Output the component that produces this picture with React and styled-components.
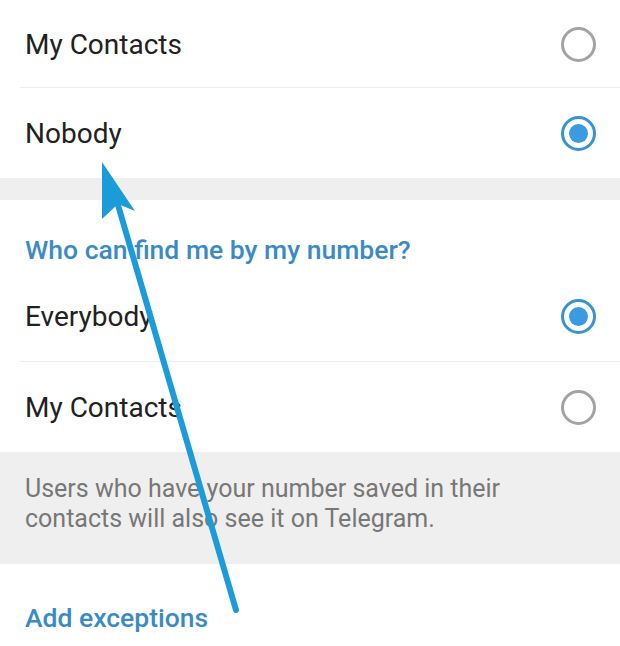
import React, { useState } from "react";
import styled, { createGlobalStyle } from "styled-components";

const GlobalStyle = createGlobalStyle`
  html, body {
    margin: 0;
    padding: 0;
    background: #ffffff;
  }
  body {
    font-family: Roboto, "Noto Sans", "Liberation Sans", sans-serif;
    -webkit-font-smoothing: antialiased;
  }
`;

const Screen = styled.div`
  position: relative;
  width: 620px;
  height: 646px;
  overflow: hidden;
  background: #ffffff;
`;

const Section = styled.div`
  background: #ffffff;
`;

const Gap = styled.div`
  height: 22px;
  background: #efefef;
`;

const Header = styled.div`
  height: 70px;
  padding: 34px 25px 0;
  box-sizing: border-box;
  color: #3a8bc4;
  font-size: 26.5px;
  font-weight: 500;
  line-height: 32px;
`;

const Row = styled.div`
  display: flex;
  align-items: center;
  justify-content: space-between;
  height: ${(p) => p.h || 90}px;
  padding: 0 24px 0 25px;
  box-sizing: border-box;
  position: relative;
  cursor: pointer;

  &::after {
    content: "";
    display: ${(p) => (p.divider ? "block" : "none")};
    position: absolute;
    left: 20px;
    right: 0;
    bottom: 0;
    height: 1px;
    background: #ececec;
  }
`;

const Label = styled.span`
  font-size: 28px;
  color: #212121;
`;

const Radio = styled.span`
  width: 35px;
  height: 35px;
  box-sizing: border-box;
  border-radius: 50%;
  border: 3px solid ${(p) => (p.checked ? "#3a93d1" : "#a3a3a3")};
  display: flex;
  align-items: center;
  justify-content: center;

  &::before {
    content: "";
    display: ${(p) => (p.checked ? "block" : "none")};
    width: 19px;
    height: 19px;
    border-radius: 50%;
    background: #3b9be0;
  }
`;

const Info = styled.div`
  background: #efefef;
  padding: 22px 25px 0;
  height: 112px;
  box-sizing: border-box;
  color: #777777;
  font-size: 25px;
  line-height: 30px;
`;

const Action = styled.div`
  padding: 38px 25px 0;
  color: #3a8bc4;
  font-size: 26.5px;
  font-weight: 500;
  line-height: 32px;
`;

const Pointer = styled.svg`
  position: absolute;
  left: 0;
  top: 0;
  pointer-events: none;
`;

const Option = ({ label, checked, divider, h, onPick }) => (
  <Row divider={divider} h={h} onClick={onPick}>
    <Label>{label}</Label>
    <Radio checked={checked} />
  </Row>
);

export default function App() {
  const [seeNumber, setSeeNumber] = useState("nobody");
  const [findMe, setFindMe] = useState("everybody");

  return (
    <Screen>
      <GlobalStyle />
      <Section>
        <Option
          label="My Contacts"
          h={88}
          divider
          checked={seeNumber === "contacts"}
          onPick={() => setSeeNumber("contacts")}
        />
        <Option
          label="Nobody"
          checked={seeNumber === "nobody"}
          onPick={() => setSeeNumber("nobody")}
        />
      </Section>
      <Gap />
      <Section>
        <Header>Who can find me by my number?</Header>
        <Option
          label="Everybody"
          h={92}
          divider
          checked={findMe === "everybody"}
          onPick={() => setFindMe("everybody")}
        />
        <Option
          label="My Contacts"
          checked={findMe === "contacts"}
          onPick={() => setFindMe("contacts")}
        />
      </Section>
      <Info>
        Users who have your number saved in their
        <br />
        contacts will also see it on Telegram.
      </Info>
      <Action>Add exceptions</Action>

      {/* annotation arrow pointing at the selected option */}
      <Pointer width="620" height="646" viewBox="0 0 620 646">
        <line
          x1="236"
          y1="610"
          x2="118"
          y2="205"
          stroke="#1b9bd8"
          strokeWidth="6"
          strokeLinecap="round"
        />
        <path d="M102 162 L135 211 L118 204 L102 219 Z" fill="#1b9bd8" />
      </Pointer>
    </Screen>
  );
}
